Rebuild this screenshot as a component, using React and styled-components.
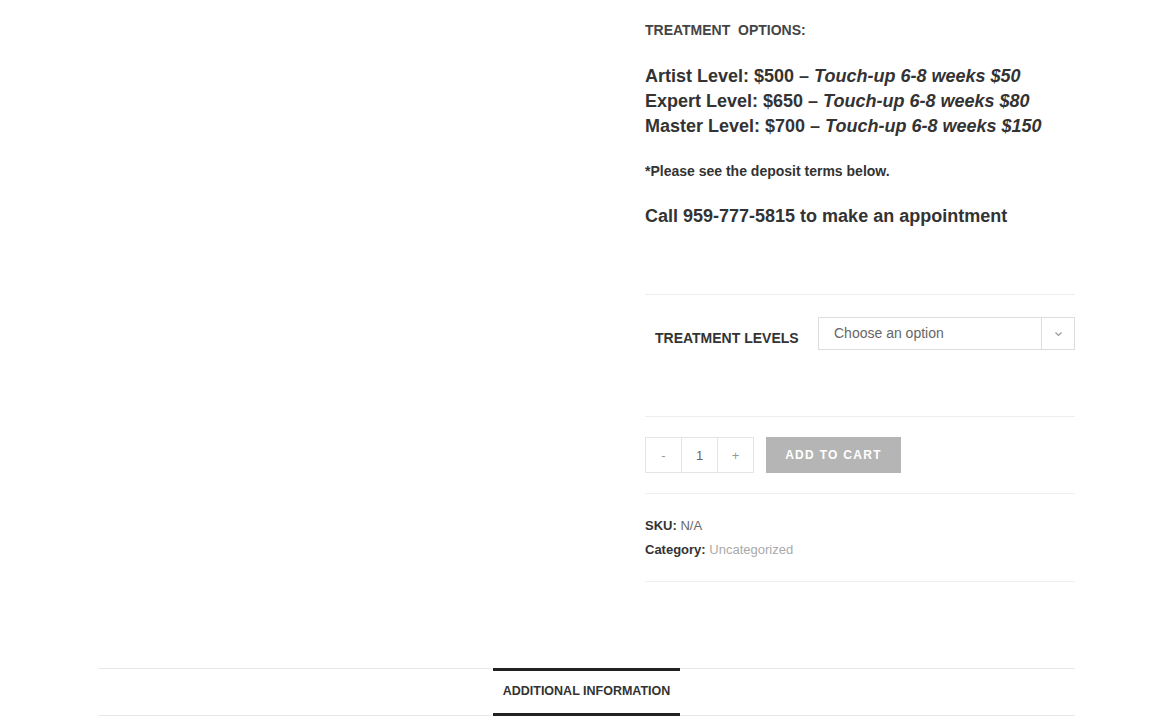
import React from "react";
import styled, { createGlobalStyle } from "styled-components";

const GlobalStyle = createGlobalStyle`
  body {
    margin: 0;
    padding-right: 1px;
    background: #fff;
    font-family: "Liberation Sans", Arial, sans-serif;
    color: #333;
  }
`;

const Container = styled.div`
  width: 977px;
  margin: 0 auto;
`;

const ProductRow = styled.div`
  display: grid;
  grid-template-columns: 1fr 430px;
`;

const Gallery = styled.div``;

const Summary = styled.div`
  padding-top: 20px;
`;

const SmallHeading = styled.p`
  margin: 0;
  font-size: 14px;
  line-height: 20px;
  font-weight: 700;
  color: #444;
  white-space: pre;
`;

const PriceList = styled.div`
  margin-top: 24px;
`;

const BigLine = styled.p`
  margin: ${(props) => props.$spaced || "0"};
  font-size: 18px;
  line-height: 25px;
  font-weight: 700;
  color: #333;
  white-space: nowrap;
  em {
    font-style: italic;
  }
`;

const Note = styled.p`
  margin: 22px 0 0;
  font-size: 14px;
  line-height: 20px;
  font-weight: 700;
  color: #333;
`;

const VariationsRow = styled.div`
  display: flex;
  align-items: flex-start;
  margin-top: 65px;
  border-top: 1px solid #eee;
  padding: 22px 0 66px;
`;

const VariationLabel = styled.label`
  width: 173px;
  box-sizing: border-box;
  padding: 11px 0 0 10px;
  font-size: 14px;
  line-height: 20px;
  font-weight: 700;
  color: #333;
`;

const FakeSelect = styled.div`
  flex: 1;
  display: flex;
  height: 33px;
  box-sizing: border-box;
  border: 1px solid #ddd;
  font-size: 14px;
  color: #666;
`;

const SelectText = styled.span`
  flex: 1;
  padding-left: 15px;
  line-height: 31px;
`;

const SelectArrow = styled.span`
  width: 32px;
  border-left: 1px solid #ddd;
  display: flex;
  align-items: center;
  justify-content: center;
`;

const CartRow = styled.div`
  display: flex;
  align-items: center;
  gap: 12px;
  border-top: 1px solid #eee;
  padding: 20px 0;
`;

const Quantity = styled.div`
  display: flex;
`;

const QtyCell = styled.span`
  width: 37px;
  height: 36px;
  box-sizing: border-box;
  border: 1px solid #e4e4e4;
  margin-left: ${(props) => (props.$first ? "0" : "-1px")};
  display: flex;
  align-items: center;
  justify-content: center;
  font-size: 13px;
  color: ${(props) => (props.$value ? "#666" : "#999")};
`;

const AddButton = styled.button`
  height: 36px;
  width: 135px;
  padding: 0;
  border: 0;
  background: #b5b5b5;
  color: #fff;
  font-family: "Liberation Sans", Arial, sans-serif;
  font-size: 12px;
  font-weight: 700;
  letter-spacing: 1.3px;
  text-transform: uppercase;
`;

const Meta = styled.div`
  border-top: 1px solid #eee;
  border-bottom: 1px solid #eee;
  padding: 20px 0 19px;
`;

const MetaLine = styled.div`
  font-size: 13px;
  line-height: 24px;
  color: #666;
  b {
    color: #333;
  }
`;

const MetaLink = styled.a`
  color: #aaa;
  text-decoration: none;
`;

const Tabs = styled.ul`
  list-style: none;
  margin: 86px 0 0;
  padding: 0;
  display: flex;
  justify-content: center;
  border-top: 1px solid #e9e9e9;
  border-bottom: 1px solid #e9e9e9;
`;

const Tab = styled.li`
  margin: -1px 0;
  padding: 11px 10px 13px;
  border-top: 3px solid #222;
  border-bottom: 3px solid #222;
  font-size: 12.5px;
  line-height: 18px;
  font-weight: 700;
  color: #333;
  text-transform: uppercase;
`;

function Chevron() {
  return (
    <svg width="9" height="6" viewBox="0 0 9 6">
      <path d="M1.5 1.5l3 3 3-3" fill="none" stroke="#999" strokeWidth="1.2" />
    </svg>
  );
}

export default function App() {
  return (
    <Container>
      <GlobalStyle />
      <ProductRow>
        <Gallery />
        <Summary>
          <SmallHeading>TREATMENT  OPTIONS:</SmallHeading>
          <PriceList>
            <BigLine>
              Artist Level: $500 – <em>Touch-up 6-8 weeks $50</em>
            </BigLine>
            <BigLine>
              Expert Level: $650 – <em>Touch-up 6-8 weeks $80</em>
            </BigLine>
            <BigLine>
              Master Level: $700 – <em>Touch-up 6-8 weeks $150</em>
            </BigLine>
          </PriceList>
          <Note>*Please see the deposit terms below.</Note>
          <BigLine $spaced="23px 0 0">Call 959-777-5815 to make an appointment</BigLine>

          <VariationsRow>
            <VariationLabel>TREATMENT LEVELS</VariationLabel>
            <FakeSelect>
              <SelectText>Choose an option</SelectText>
              <SelectArrow>
                <Chevron />
              </SelectArrow>
            </FakeSelect>
          </VariationsRow>

          <CartRow>
            <Quantity>
              <QtyCell $first>-</QtyCell>
              <QtyCell $value>1</QtyCell>
              <QtyCell>+</QtyCell>
            </Quantity>
            <AddButton type="button">Add to cart</AddButton>
          </CartRow>

          <Meta>
            <MetaLine>
              <b>SKU:</b> N/A
            </MetaLine>
            <MetaLine>
              <b>Category:</b> <MetaLink href="#">Uncategorized</MetaLink>
            </MetaLine>
          </Meta>
        </Summary>
      </ProductRow>

      <Tabs>
        <Tab>Additional information</Tab>
      </Tabs>
    </Container>
  );
}
